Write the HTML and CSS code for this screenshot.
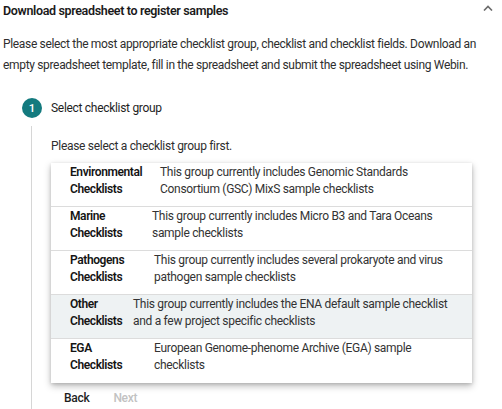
FILE: index.html
```html
<!DOCTYPE html>
<html>
<head>
<meta charset="utf-8">
<link rel="stylesheet" href="styles.css">
</head>
<body>
<div class="page">
  <div class="header">
    <div class="title">Download spreadsheet to register samples</div>
    <svg class="chevron" width="10" height="6" viewBox="0 0 10 6"><path d="M1 5.5 L5 1.5 L9 5.5" fill="none" stroke="#6b6b6b" stroke-width="1.6"/></svg>
  </div>
  <p class="intro">Please select the most appropriate checklist group, checklist and checklist fields. Download an<br>empty spreadsheet template, fill in the spreadsheet and submit the spreadsheet using Webin.</p>
  <div class="step-head">
    <div class="step-num">1</div>
    <div class="step-label">Select checklist group</div>
  </div>
  <div class="step-body">
    <div class="hint">Please select a checklist group first.</div>
    <div class="panel">
      <div class="row">
        <div class="label l-env">Environmental<br>Checklists</div>
        <div class="desc">This group currently includes Genomic Standards<br>Consortium (GSC) MixS sample checklists</div>
      </div>
      <div class="row">
        <div class="label l-marine">Marine<br>Checklists</div>
        <div class="desc">This group currently includes Micro B3 and Tara Oceans<br>sample checklists</div>
      </div>
      <div class="row">
        <div class="label l-path">Pathogens<br>Checklists</div>
        <div class="desc">This group currently includes several prokaryote and virus<br>pathogen sample checklists</div>
      </div>
      <div class="row active">
        <div class="label l-other">Other<br>Checklists</div>
        <div class="desc">This group currently includes the ENA default sample checklist<br>and a few project specific checklists</div>
      </div>
      <div class="row">
        <div class="label l-ega">EGA<br>Checklists</div>
        <div class="desc">European Genome-phenome Archive (EGA) sample<br>checklists</div>
      </div>
    </div>
    <div class="actions">
      <span class="btn">Back</span>
      <span class="btn disabled">Next</span>
    </div>
  </div>
</div>
</body>
</html>
```
FILE: styles.css
```css
html, body {
  margin: 0;
  padding: 0;
  background: #fff;
}
body {
  font-family: Roboto, "Liberation Sans", sans-serif;
  color: #212121;
  overflow: hidden;
  letter-spacing: -0.3px;
}
.page {
  padding: 0 0 0 3px;
  width: 499px;
}
.header {
  display: flex;
  justify-content: space-between;
  align-items: center;
  height: 22px;
  padding-right: 9px;
}
.title {
  font-size: 12.5px;
  font-weight: 600;
  letter-spacing: -0.35px;
  color: #1a1a1a;
  line-height: 22px;
}
.chevron {
  margin-top: -6px;
}
.intro {
  margin: 12px 0 0 0;
  font-size: 12px;
  letter-spacing: -0.33px;
  line-height: 21px;
  color: #2e2e2e;
}
.step-head {
  display: flex;
  align-items: center;
  margin-top: 22px;
  padding-left: 19px;
  height: 20px;
}
.step-num {
  width: 20px;
  height: 20px;
  border-radius: 50%;
  background: #137a7e;
  color: #fff;
  font-size: 11.5px;
  font-weight: 500;
  letter-spacing: 0;
  display: flex;
  align-items: center;
  justify-content: center;
}
.step-label {
  margin-left: 9px;
  font-size: 12px;
  color: #1e1e1e;
}
.step-body {
  margin: 8px 0 0 28px;
  border-left: 1px solid #d6d6d6;
  padding: 11px 0 8px 19px;
}
.hint {
  font-size: 12px;
  line-height: 18px;
  color: #2e2e2e;
}
.panel {
  margin-top: 8px;
  width: 421px;
  background: #fff;
  box-shadow: 0 3px 7px rgba(0,0,0,0.28), 0 1px 3px rgba(0,0,0,0.12);
}
.row {
  display: flex;
  height: 44px;
  box-sizing: border-box;
  padding-left: 19px;
  padding-top: 1px;
  border-bottom: 1px solid #dcdcdc;
  font-size: 12px;
  line-height: 17px;
}
.row:last-child {
  border-bottom: none;
}
.row.active {
  background: #eef2f3;
}
.label {
  font-weight: 600;
  letter-spacing: -0.4px;
  color: #141414;
  flex: none;
  white-space: nowrap;
}
.l-env { width: 90px; }
.l-marine { width: 82px; }
.l-path { width: 84px; }
.l-other { width: 63px; }
.l-ega { width: 84px; }
.desc {
  color: #333;
  white-space: nowrap;
}
.actions {
  display: flex;
  padding-left: 13px;
  margin-top: 7px;
  font-size: 12px;
  font-weight: 500;
  line-height: 16px;
}
.btn {
  color: #1e1e1e;
  margin-right: 24px;
}
.btn.disabled {
  color: #c2c2c2;
}
```
